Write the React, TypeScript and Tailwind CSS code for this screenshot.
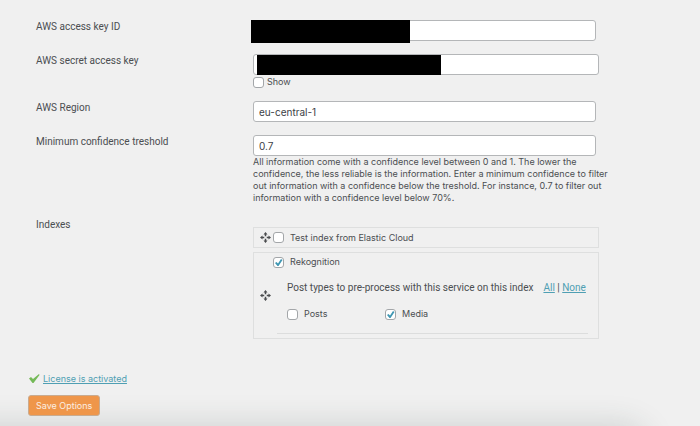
import type { ReactNode } from "react";

const inputClass =
  "block h-[21px] w-full rounded-[3px] border border-[#b4b6b8] bg-white px-[5px] text-[10px] text-[#3c4146] outline-none";

const linkClass = "text-[#4f9fb3] underline";

function MoveIcon() {
  return (
    <svg
      viewBox="0 0 22 22"
      className="size-[11px] shrink-0"
      fill="#4a4c4e"
      aria-hidden="true"
    >
      <path d="M11 0l4 5h-2.5v3.5h-3V5H7zM11 22l4-5h-2.5v-3.5h-3V17H7zM0 11l5-4v2.5h3.5v3H5V15zM22 11l-5-4v2.5h-3.5v3H17V15z" />
    </svg>
  );
}

type CheckProps = {
  id: string;
  label: string;
  checked?: boolean;
  gap?: string;
};

function Check({ id, label, checked = false, gap = "gap-[6px]" }: CheckProps) {
  return (
    <div className={`flex items-center ${gap}`}>
      <span className="relative block size-[11px] shrink-0">
        <input
          id={id}
          type="checkbox"
          defaultChecked={checked}
          className="peer block size-[11px] appearance-none rounded-[3px] border border-[#a3a6a9] bg-white"
        />
        <svg
          viewBox="0 0 22 22"
          className="pointer-events-none absolute inset-0 hidden size-[11px] peer-checked:block"
          fill="#3f97b3"
          aria-hidden="true"
        >
          <path d="M4 12l3-2 3 3 6-9 3 2-8 12H9z" />
        </svg>
      </span>
      <label htmlFor={id} className="text-[9px] leading-3">
        {label}
      </label>
    </div>
  );
}

type RowProps = {
  label: string;
  htmlFor?: string;
  children: ReactNode;
};

function Row({ label, htmlFor, children }: RowProps) {
  return (
    <div className="flex items-start">
      <label
        htmlFor={htmlFor}
        className="w-[217px] shrink-0 font-[Roboto,sans-serif] text-[10px] leading-[14px]"
      >
        {label}
      </label>
      <div className="min-w-0 flex-1">{children}</div>
    </div>
  );
}

export default function App() {
  return (
    <div className="relative min-h-screen overflow-hidden bg-[#f0f0f0] font-[Inter,sans-serif] text-[#4b4e51]">
      <form onSubmit={(e) => e.preventDefault()} className="relative z-10">
        <div className="pt-5 pr-6 pl-9">
          <Row label="AWS access key ID" htmlFor="access-key">
            <div className="relative max-w-[343px]">
              <input id="access-key" type="text" className={inputClass} />
              <span className="absolute top-0 -left-[2px] h-[23px] w-[159px] bg-black" />
            </div>
          </Row>

          <div className="mt-[13px]">
            <Row label="AWS secret access key" htmlFor="secret-key">
              <div className="relative max-w-[346px]">
                <input id="secret-key" type="password" className={inputClass} />
                <span className="absolute top-px left-1 h-5 w-[184px] bg-black" />
              </div>
              <div className="mt-px">
                <Check id="show" label="Show" gap="gap-[3px]" />
              </div>
            </Row>
          </div>

          <div className="mt-[13px]">
            <Row label="AWS Region" htmlFor="region">
              <div className="max-w-[343px]">
                <input
                  id="region"
                  type="text"
                  defaultValue="eu-central-1"
                  className={inputClass}
                />
              </div>
            </Row>
          </div>

          <div className="mt-[13px]">
            <Row label="Minimum confidence treshold" htmlFor="threshold">
              <div className="max-w-[343px]">
                <input
                  id="threshold"
                  type="text"
                  defaultValue="0.7"
                  className={inputClass}
                />
              </div>
              <p className="max-w-[364px] text-[9px] leading-3">
                All information come with a confidence level between 0 and 1.
                The lower the confidence, the less reliable is the information.
                Enter a minimum confidence to filter out information with a
                confidence below the treshold. For instance, 0.7 to filter out
                information with a confidence level below 70%.
              </p>
            </Row>
          </div>

          <div className="mt-[14px]">
            <Row label="Indexes">
              <div className="max-w-[346px] pt-[9px]">
                <div className="flex h-[21px] items-center gap-[2px] border border-[#dedfdf] pl-[6px]">
                  <MoveIcon />
                  <Check id="test-index" label="Test index from Elastic Cloud" />
                </div>

                <div className="mt-1 flex items-center gap-[2px] border border-[#dedfdf] pt-[3px] pr-[10px] pb-1 pl-[6px]">
                  <MoveIcon />
                  <div className="min-w-0 flex-1">
                    <Check id="rekognition" label="Rekognition" checked />
                    <div className="mt-[14px] flex items-center pl-[14px] font-[Roboto,sans-serif] text-[10px] leading-3 whitespace-nowrap">
                      <span>Post types to pre-process with this service on this index</span>
                      <span className="ml-[10px]">
                        <a href="#all" className={linkClass}>
                          All
                        </a>{" "}
                        |{" "}
                        <a href="#none" className={linkClass}>
                          None
                        </a>
                      </span>
                    </div>
                    <div className="mt-[14px] flex pl-[14px]">
                      <div className="w-[98px]">
                        <Check id="posts" label="Posts" />
                      </div>
                      <Check id="media" label="Media" checked />
                    </div>
                    <hr className="mt-[13px] ml-1 border-[#dcdddd]" />
                  </div>
                </div>
              </div>
            </Row>
          </div>
        </div>

        <div className="mt-[34px] flex items-center gap-[3px] pl-[29px]">
          <svg
            viewBox="0 0 22 20"
            className="h-[10px] w-[11px]"
            fill="#74b957"
            aria-hidden="true"
          >
            <path d="M0 9l4-3 4 4L20 0l1 2L9 18H7z" />
          </svg>
          <a href="#license" className={`text-[9px] leading-3 ${linkClass}`}>
            License is activated
          </a>
        </div>

        <button
          type="submit"
          className="mt-[10px] mb-[10px] ml-7 block h-[21px] rounded-[3px] border border-[#c9ab90] bg-[#ef964a] px-[7px] text-[9px] leading-3 text-[#fbeee3]"
        >
          Save Options
        </button>
      </form>

      {/* Soft shade along the bottom edge */}
      <div className="absolute -bottom-10 -left-10 h-10 w-[98%] rounded-tr-3xl shadow-[0_0_32px_rgba(40,60,55,0.18)]" />
    </div>
  );
}
